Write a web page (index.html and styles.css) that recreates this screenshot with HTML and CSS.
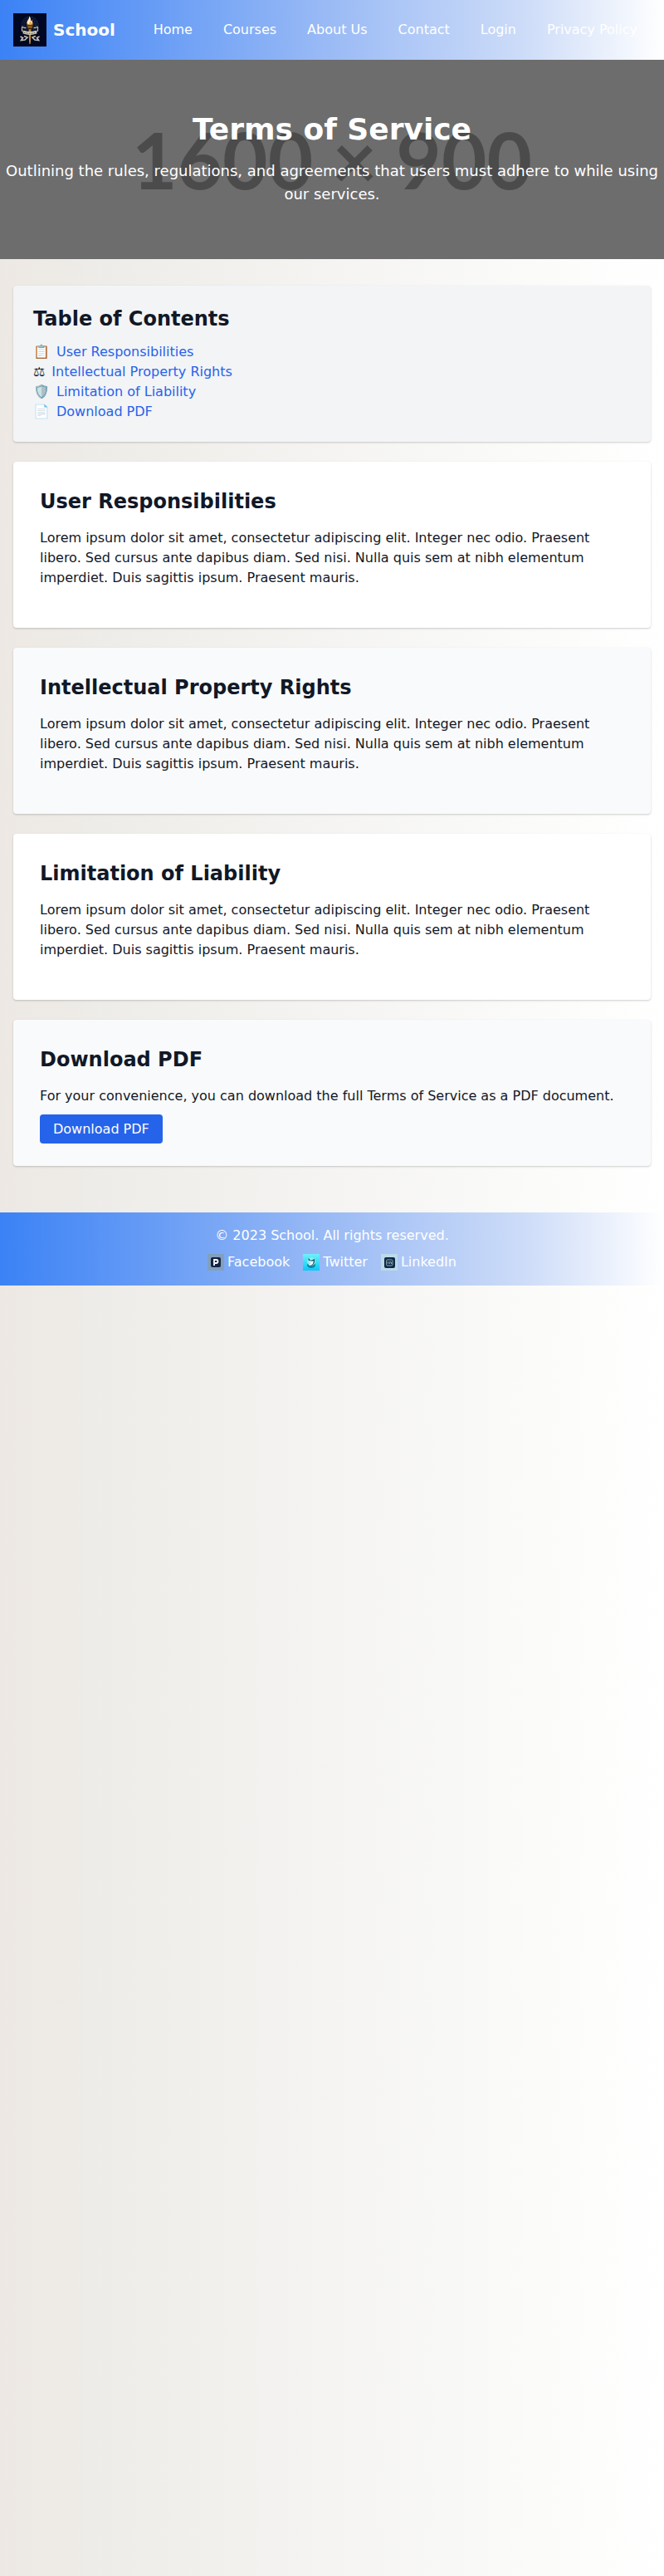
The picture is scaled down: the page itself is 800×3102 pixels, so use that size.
FILE: index.html
```html
<!DOCTYPE html>
<html lang="en">
<head>
<meta charset="utf-8">
<meta name="viewport" content="width=device-width, initial-scale=1">
<title>Terms of Service - School</title>
<link rel="stylesheet" href="styles.css">
</head>
<body>
<header class="header">
  <a class="brand" href="#">
    <svg class="logo" viewBox="0 0 40 40" aria-hidden="true">
      <rect width="40" height="40" fill="#000722"/>
      <circle cx="20" cy="14" r="10" fill="#0b1430" stroke="#2f3852" stroke-dasharray="1 1"/>
      <circle cx="20" cy="14" r="7" fill="none" stroke="#1d2744" stroke-width="2" stroke-dasharray="1 2"/>
      <path d="M18.500 19h3l-.7 18h-1.600z" fill="#a86c26"/>
      <path d="M20 20v15" stroke="#f0bd62" stroke-width=".7"/>
      <path d="M16 11h8l-1.500 7h-5z" fill="#b97524"/>
      <path d="M16 15h8M17 18h6" stroke="#4a2f14" stroke-width="1.500"/>
      <path d="M17.500 13c-3-4 2.500-5 1.500-9.500 3 2.500 1.500 5 2.500 6l.8-1.500c1.500 3 0 5-1.500 5.500z" fill="#fff1c7"/>
      <path d="M19.500 13c-1-2 1.500-3 1.500-4 1 2 1 3 0 4z" fill="#efa83b"/>
      <path d="M10.500 16l3 1.500h2m14-1.500-3 1.500h-2M10.500 16v5l3 1.500m16-6.500v5l-3 1.500" fill="none" stroke="#b9b6a6" stroke-width="1.300"/>
      <path d="M12 22.500q8 3 16 0" fill="none" stroke="#d8d1b5" stroke-width="4"/>
      <path d="M13 23q7 2.500 14 0" fill="none" stroke="#4d4c44" stroke-width="1.200" stroke-dasharray="1 1"/>
      <path d="M8.500 28l3 1.500-2 3 4.500-.5 3-3-4-1.500m18.500.5-3 1.500 2 3-4.500-.5-3-3 4-1.500" fill="none" stroke="#c5c2b4" stroke-width="1.600"/>
    </svg>
    <span>School</span>
  </a>
  <nav class="nav">
    <a href="#">Home</a>
    <a href="#">Courses</a>
    <a href="#">About Us</a>
    <a href="#">Contact</a>
    <a href="#">Login</a>
    <a href="#">Privacy Policy</a>
  </nav>
</header>
<section class="hero">
  <span class="hero-size" aria-hidden="true">1600 × 900</span>
  <div class="hero-text">
    <h1>Terms of Service</h1>
    <p>Outlining the rules, regulations, and agreements that users must adhere to while using our services.</p>
  </div>
</section>
<main class="main">
  <nav class="card toc">
    <h2>Table of Contents</h2>
    <ul>
      <li><span>📋</span><a href="#user">User Responsibilities</a></li>
      <li><span>⚖</span><a href="#ip">Intellectual Property Rights</a></li>
      <li><span>🛡️</span><a href="#liability">Limitation of Liability</a></li>
      <li><span>📄</span><a href="#download">Download PDF</a></li>
    </ul>
  </nav>
  <section class="card" id="user">
    <h2>User Responsibilities</h2>
    <p>Lorem ipsum dolor sit amet, consectetur adipiscing elit. Integer nec odio. Praesent libero. Sed cursus ante dapibus diam. Sed nisi. Nulla quis sem at nibh elementum imperdiet. Duis sagittis ipsum. Praesent mauris.</p>
  </section>
  <section class="card tinted" id="ip">
    <h2>Intellectual Property Rights</h2>
    <p>Lorem ipsum dolor sit amet, consectetur adipiscing elit. Integer nec odio. Praesent libero. Sed cursus ante dapibus diam. Sed nisi. Nulla quis sem at nibh elementum imperdiet. Duis sagittis ipsum. Praesent mauris.</p>
  </section>
  <section class="card" id="liability">
    <h2>Limitation of Liability</h2>
    <p>Lorem ipsum dolor sit amet, consectetur adipiscing elit. Integer nec odio. Praesent libero. Sed cursus ante dapibus diam. Sed nisi. Nulla quis sem at nibh elementum imperdiet. Duis sagittis ipsum. Praesent mauris.</p>
  </section>
  <section class="card tinted" id="download">
    <h2>Download PDF</h2>
    <p>For your convenience, you can download the full Terms of Service as a PDF document.</p>
    <a class="button" href="#">Download PDF</a>
  </section>
</main>
<footer class="footer">
  <p>© 2023 School. All rights reserved.</p>
  <div class="social">
    <a href="#">
      <svg viewBox="0 0 20 20" aria-hidden="true"><rect width="20" height="20" fill="#82a0bd"/><rect x="4" y="4" width="12" height="12" rx="2" fill="#142444"/><path d="M8 14V7h2.500a1.700 1.700 0 0 1 0 4H9" fill="none" stroke="#fff" stroke-width="1.800"/></svg>
      <span>Facebook</span>
    </a>
    <a href="#">
      <svg viewBox="0 0 20 20" aria-hidden="true">
        <defs><linearGradient id="sky" x1="0" y1="0" x2="0" y2="1"><stop offset="0" stop-color="#6ff0fb"/><stop offset="1" stop-color="#0bc8f6"/></linearGradient></defs>
        <rect width="20" height="20" fill="url(#sky)"/><ellipse cx="10" cy="13.500" rx="5" ry="3.500" fill="#0887a8"/><circle cx="10" cy="9" r="5" fill="#8cecf3"/><path d="M7 5.500q0 3 3 3l3.500-1.500q.5 6-5.500 6.500" fill="none" stroke="#12475c" stroke-width="1.200"/><path d="M7.500 9l4 1q0 2.500-4 3" fill="none" stroke="#fff" stroke-width="1.800"/></svg>
      <span>Twitter</span>
    </a>
    <a href="#">
      <svg viewBox="0 0 20 20" aria-hidden="true"><rect width="20" height="20" fill="#bed9e8"/><rect x="4" y="4" width="13" height="13" rx="2" fill="#0b2c47"/><rect x="6.500" y="7" width="7.500" height="7" rx="1.500" fill="none" stroke="#a7b7c2" stroke-width=".9"/><path d="M8.500 9v3m2 0V9.500l2 .5v2" fill="none" stroke="#a7b7c2" stroke-width=".9"/></svg>
      <span>LinkedIn</span>
    </a>
  </div>
</footer>
</body>
</html>
```
FILE: styles.css
```css
* { box-sizing: border-box; }
html { background: linear-gradient(to right, #ede8e4, #eeece8 14%, #f5f4f2 50%, #fafaf8 76%, #ffffff); min-height: 100%; }
body { margin: 0; font-family: "DejaVu Sans", sans-serif; font-size: 16px; line-height: 24px; color: #111827; }
h1, h2, p, ul { margin: 0; }
ul { padding: 0; list-style: none; }
a { text-decoration: none; }
.header, .footer { background: linear-gradient(to right, #3b82f6, #9bbbf5 50%, #cddcf8 79%, #ffffff); color: #ffffff; }
.header { display: flex; align-items: center; justify-content: space-between; padding: 16px; }
.header a, .footer a { color: inherit; }
.brand { display: flex; align-items: center; gap: 8px; font-size: 20px; line-height: 28px; font-weight: 700; }
.logo { display: block; width: 40px; height: 40px; }
.nav { display: flex; gap: 5px; }
.nav a { padding: 8px 16px; white-space: nowrap; }
.hero { display: grid; place-items: center; min-height: 240px; overflow: hidden; background: #6d6d6d; color: #ffffff; text-align: center; }
.hero > * { grid-area: 1 / 1; }
.hero-size { font-family: Lato, sans-serif; font-weight: 700; font-size: 94px; line-height: 96px; color: #4b4b4b; white-space: nowrap; }
.hero-text { position: relative; }
.hero h1 { font-size: 36px; line-height: 40px; margin-bottom: 16px; }
.hero p { font-size: 18px; line-height: 28px; }
.main { padding: 32px 16px; }
.card { margin-bottom: 24px; padding: 32px; border-radius: 4px; background: #ffffff; box-shadow: 0 1px 3px rgba(0, 0, 0, 0.1), 0 1px 2px rgba(0, 0, 0, 0.1); }
.tinted { background: #f9fafb; }
.card h2 { margin-bottom: 16px; font-size: 24px; line-height: 32px; }
.card p { margin-bottom: 16px; }
.toc { padding: 24px; background: #f3f4f6; }
.toc h2 { margin-bottom: 12px; }
.toc li { display: flex; gap: 8px; height: 24px; }
.toc a { color: #2563eb; }
.button { padding: 8px 16px; border-radius: 4px; background: #2563eb; color: #ffffff; }
.footer { padding: 16px; text-align: center; }
.social { display: flex; justify-content: center; gap: 16px; margin-top: 8px; }
.social a { display: flex; align-items: center; gap: 4px; }
.social svg { display: block; width: 20px; height: 20px; }
```
